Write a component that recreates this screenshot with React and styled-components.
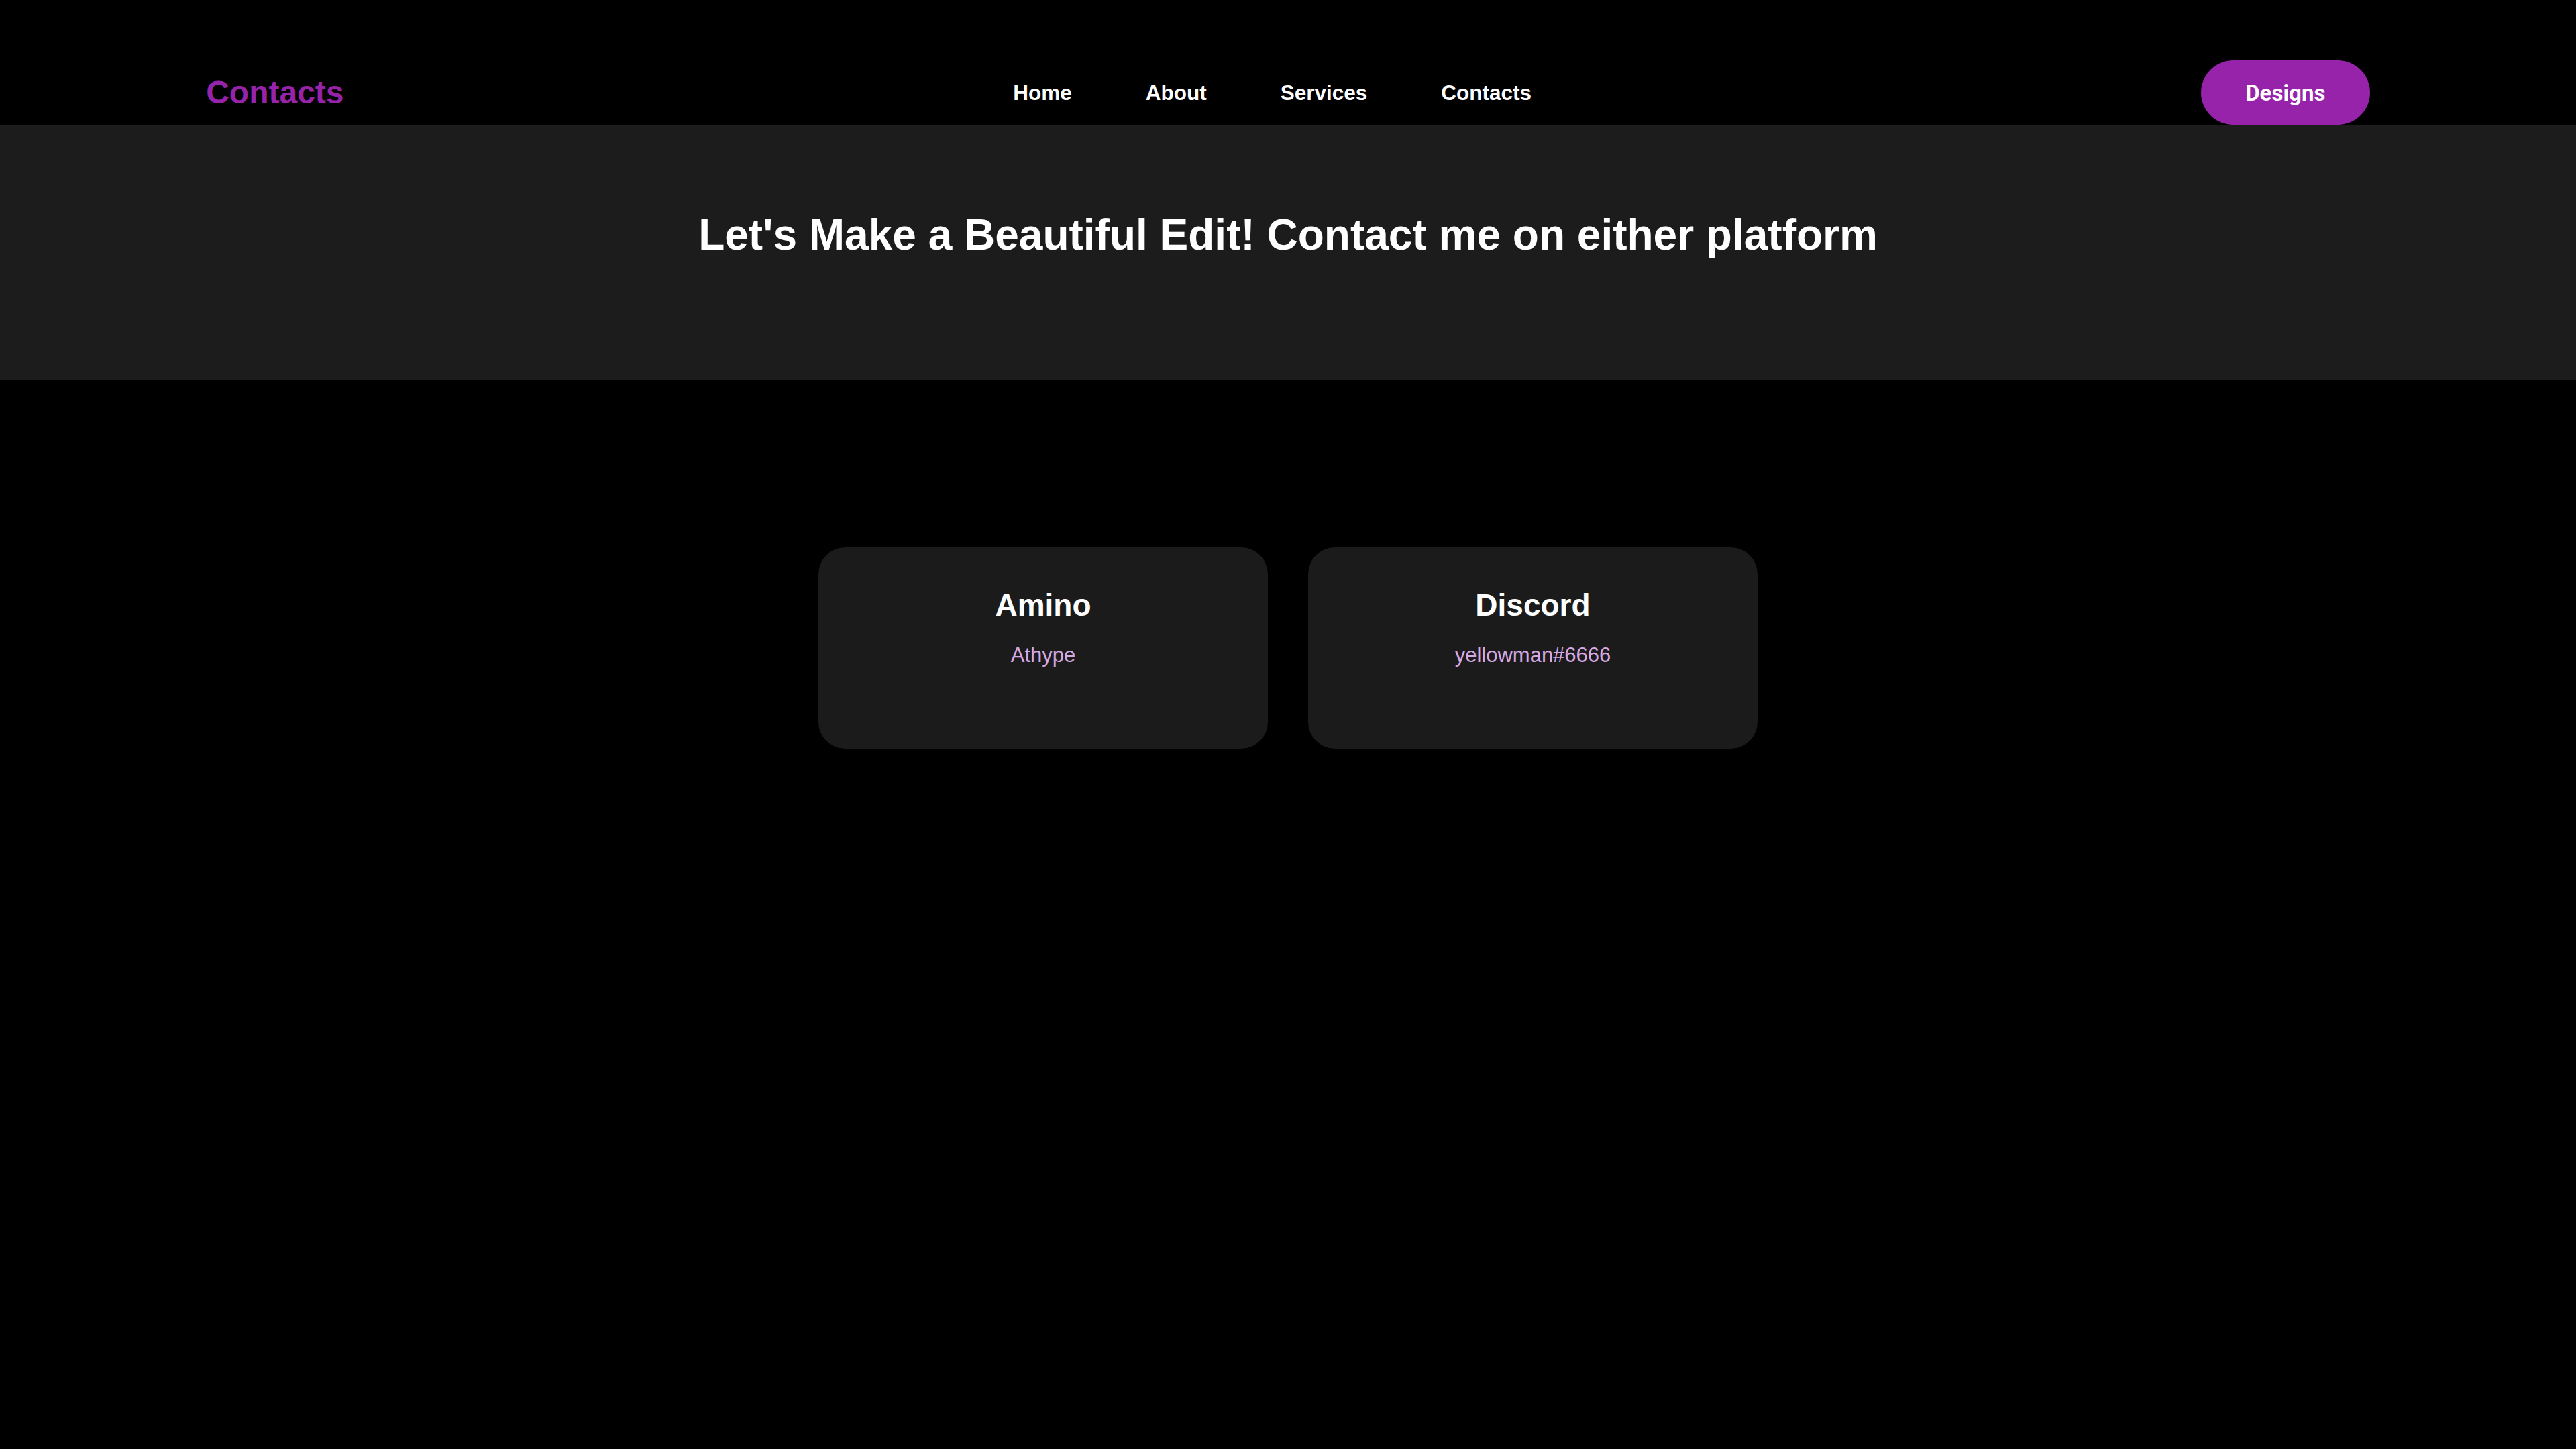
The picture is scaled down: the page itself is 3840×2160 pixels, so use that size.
import React from "react";
import styled, { createGlobalStyle } from "styled-components";

const Global = createGlobalStyle`
  html, body { margin: 0; padding: 0; background: #000; }
  body { font-family: "Liberation Sans", Arial, sans-serif; color: #fff; min-height: 2160px; }
  * { box-sizing: border-box; }
`;

const Page = styled.div`
  background: #000;
  min-height: 2160px;
`;

const Header = styled.header`
  display: flex;
  align-items: center;
  justify-content: space-between;
  padding: 90px 8% 0;
  background: #000;
`;

const Logo = styled.div`
  font-size: 48px;
  font-weight: 700;
  color: #9623a9;
  line-height: 1;
`;

const Nav = styled.nav`
  display: flex;
  gap: 110px;
`;

const NavLink = styled.a`
  font-size: 31.5px;
  font-weight: 700;
  color: #fff;
  text-decoration: none;
`;

const PillButton = styled.button`
  width: 252px;
  height: 96px;
  border: none;
  border-radius: 48px;
  background: #9623a9;
  color: #fff;
  font-family: Roboto, "Liberation Sans", sans-serif;
  font-size: 33px;
  font-weight: 700;
  cursor: pointer;
`;

const Hero = styled.section`
  background: #1c1c1c;
  height: 380px;
  padding-top: 127px;
  text-align: center;
`;

const HeroTitle = styled.h1`
  margin: 0;
  font-size: 64px;
  line-height: 74px;
  font-weight: 700;
  color: #fff;
`;

const CardRow = styled.section`
  display: flex;
  justify-content: center;
  gap: 60px;
  margin-top: 250px;
`;

const Card = styled.div`
  width: 670px;
  height: 300px;
  background: #1b1b1b;
  border-radius: 40px;
  display: flex;
  flex-direction: column;
  align-items: center;
  padding-top: 60px;
`;

const CardTitle = styled.h2`
  margin: 0;
  font-size: 46px;
  line-height: 53px;
  font-weight: 700;
  color: #fff;
`;

const CardText = styled.p`
  margin: 30px 0 0;
  font-size: 31px;
  line-height: 36px;
  color: #d7a9e3;
`;

const contacts = [
  { name: "Amino", handle: "Athype" },
  { name: "Discord", handle: "yellowman#6666" },
];

export default function App() {
  return (
    <Page>
      <Global />
      <Header>
        <Logo>Contacts</Logo>
        <Nav>
          <NavLink href="#">Home</NavLink>
          <NavLink href="#">About</NavLink>
          <NavLink href="#">Services</NavLink>
          <NavLink href="#">Contacts</NavLink>
        </Nav>
        <PillButton>Designs</PillButton>
      </Header>
      <Hero>
        <HeroTitle>Let's Make a Beautiful Edit! Contact me on either platform</HeroTitle>
      </Hero>
      <CardRow>
        {contacts.map((c) => (
          <Card key={c.name}>
            <CardTitle>{c.name}</CardTitle>
            <CardText>{c.handle}</CardText>
          </Card>
        ))}
      </CardRow>
    </Page>
  );
}
